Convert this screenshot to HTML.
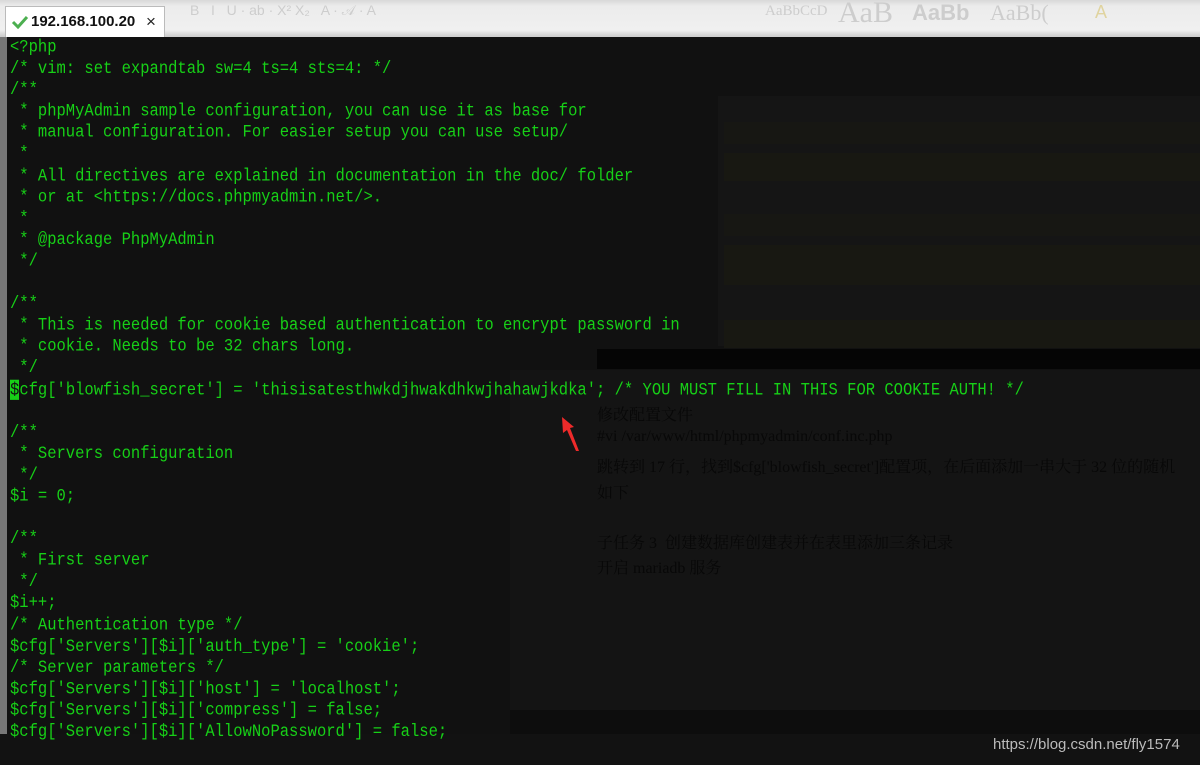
<!DOCTYPE html>
<html><head><meta charset="utf-8"><style>
body{margin:0;width:1200px;height:765px;overflow:hidden;background:#111;position:relative;font-family:"Liberation Sans",sans-serif}
.top{position:absolute;left:0;top:0;width:1200px;height:37px;background:linear-gradient(#d8d8d8 0,#ececec 6px,#f0f0f0 30px,#cfcfcf 36px)}
.faint{position:absolute;color:#cdcdcd;font-size:14px;white-space:nowrap}
.tab{position:absolute;left:5px;top:6px;width:160px;height:31px;background:#fff;border:1px solid #bbb;border-bottom:none;box-sizing:border-box}
.tab span{position:absolute;left:25px;top:6px;font-size:15px;font-weight:bold;color:#111}
.tab b{position:absolute;left:140px;top:5px;font-size:17px;color:#222;font-weight:normal}
.term{position:absolute;left:0;top:37px;width:1200px;height:728px;background:#111;border-left:7px solid #777;box-sizing:border-box}
pre{position:absolute;left:10px;top:37px;margin:0;font-family:"Liberation Mono",monospace;font-size:15.5px;color:#17d017;white-space:pre;transform:scaleY(1.12);transform-origin:0 0}
.cur{background:#17d017;color:#111}
.zh{position:absolute;left:597px;color:#080808;font-family:"Liberation Serif","Noto Serif CJK SC",serif;font-size:16px;white-space:nowrap}
</style></head><body>
<div class="top">
<div class="faint" style="left:190px;top:2px">B &nbsp; I &nbsp; U · ab · X² X₂ &nbsp; A · 𝒜 · A</div>
<div class="faint" style="left:765px;top:3px;font-family:'Liberation Serif',serif;font-size:15px">AaBbCcD</div>
<div class="faint" style="left:838px;top:-4px;font-family:'Liberation Serif',serif;font-size:30px">AaB</div>
<div class="faint" style="left:912px;top:0px;font-size:22px;font-weight:bold">AaBb</div>
<div class="faint" style="left:990px;top:0px;font-family:'Liberation Serif',serif;font-size:22px">AaBb(</div>
<div class="faint" style="left:1095px;top:2px;font-size:18px;color:#e0d4a0">A</div>
</div>
<div class="tab"><svg style="position:absolute;left:5px;top:8px" width="18" height="14"><path d="M2 7 L7 12 L16 2" stroke="#4caf50" stroke-width="3" fill="none"/></svg><span>192.168.100.20</span><b>×</b></div>
<div class="term"></div>
<div style="position:absolute;left:718px;top:96px;width:482px;height:250px;background:#151515"></div>
<div style="position:absolute;left:724px;top:122px;width:476px;height:22px;background:#171713"></div>
<div style="position:absolute;left:724px;top:153px;width:476px;height:28px;background:#181812"></div>
<div style="position:absolute;left:724px;top:214px;width:476px;height:22px;background:#171713"></div>
<div style="position:absolute;left:724px;top:245px;width:476px;height:40px;background:#181812"></div>
<div style="position:absolute;left:724px;top:320px;width:476px;height:28px;background:#181812"></div>
<div style="position:absolute;left:597px;top:349px;width:603px;height:20px;background:#050505"></div>
<div style="position:absolute;left:510px;top:370px;width:690px;height:340px;background:#141414"></div>
<div style="position:absolute;left:510px;top:710px;width:690px;height:24px;background:#0d0d0d"></div>
<div style="position:absolute;left:0;top:734px;width:1200px;height:31px;background:#121212"></div>
<div class="zh" style="top:402px">修改配置文件</div>
<div class="zh" style="top:428px">#vi /var/www/html/phpmyadmin/conf.inc.php</div>
<div class="zh" style="top:454px">跳转到 17 行，找到$cfg['blowfish_secret']配置项，在后面添加一串大于 32 位的随机</div>
<div class="zh" style="top:480px">如下</div>
<div class="zh" style="top:530px">子任务 3 &nbsp;创建数据库创建表并在表里添加三条记录</div>
<div class="zh" style="top:555px">开启 mariadb 服务</div>
<pre style="line-height:19.1px">&lt;?php
/* vim: set expandtab sw=4 ts=4 sts=4: */
/**
 * phpMyAdmin sample configuration, you can use it as base for
 * manual configuration. For easier setup you can use setup/
 *
 * All directives are explained in documentation in the doc/ folder
 * or at &lt;https://docs.phpmyadmin.net/&gt;.
 *
 * @package PhpMyAdmin
 */

/**
 * This is needed for cookie based authentication to encrypt password in
 * cookie. Needs to be 32 chars long.
 */
<span class="cur">$</span>cfg['blowfish_secret'] = 'thisisatesthwkdjhwakdhkwjhahawjkdka'; /* YOU MUST FILL IN THIS FOR COOKIE AUTH! */

/**
 * Servers configuration
 */
$i = 0;

/**
 * First server
 */
$i++;
/* Authentication type */
$cfg['Servers'][$i]['auth_type'] = 'cookie';
/* Server parameters */
$cfg['Servers'][$i]['host'] = 'localhost';
$cfg['Servers'][$i]['compress'] = false;
$cfg['Servers'][$i]['AllowNoPassword'] = false;</pre>
<svg style="position:absolute;left:558px;top:414px" width="26" height="40"><path d="M4 3 L16 13 L12 14 L21 37 L18 37 L9 16 L5 19 Z" fill="#ee2a2a"/></svg>
<div style="position:absolute;left:993px;top:736px;color:#bbb;font-size:15px">https://blog.csdn.net/fly1574</div>
</body></html>
